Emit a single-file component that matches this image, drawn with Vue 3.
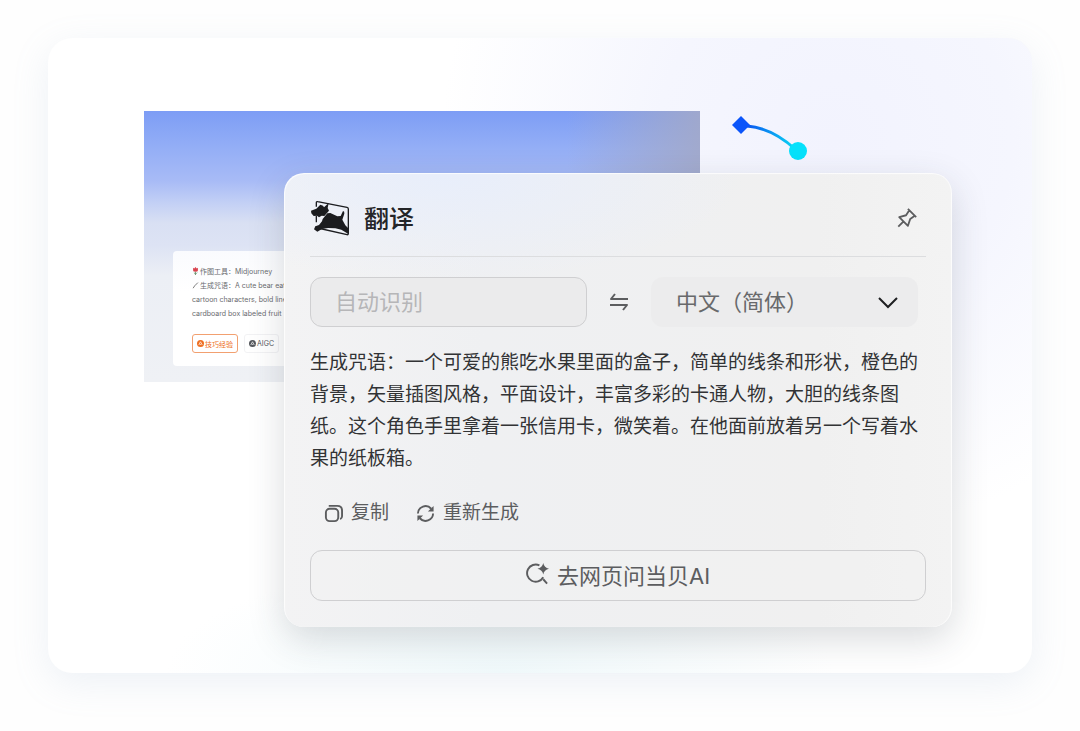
<script setup>
import { ref } from 'vue'

const source = ref('')
const target = ref('zh')
const translation =
  '生成咒语：一个可爱的熊吃水果里面的盒子，简单的线条和形状，橙色的背景，矢量插图风格，平面设计，丰富多彩的卡通人物，大胆的线条图纸。这个角色手里拿着一张信用卡，微笑着。在他面前放着另一个写着水果的纸板箱。'
</script>

<template>
  <main class="page">
    <div class="stage">
      <section class="snapshot">
        <article class="prompt">
          <p>
            <svg class="mark" viewBox="0 0 8 10" aria-hidden="true">
              <path d="M1 1l1.500 1L4 0l1.500 2L7 1v3.500Q7 6 4 6T1 4.500z" fill="#d9434f" />
              <path d="M4 6v4M4 9L2 7M4 9l2-2" stroke="#5d8a63" fill="none" />
            </svg>作图工具：Midjourney
          </p>
          <p>
            <svg class="mark" viewBox="0 0 8 10" aria-hidden="true">
              <path d="M1 9l2-3 4-4" stroke="#777" stroke-width="1.200" fill="none" />
            </svg>生成咒语：A cute bear eating
          </p>
          <p>cartoon characters, bold lines</p>
          <p>cardboard box labeled fruit</p>
          <div class="tags">
            <button type="button" class="tag hot">
              <svg viewBox="0 0 8 8" aria-hidden="true">
                <circle cx="4" cy="4" r="4" fill="#ee6f22" />
                <path d="M2 5.500L4 2l2 3.500M3 5h2" stroke="#fff" stroke-width=".8" fill="none" />
              </svg>技巧经验
            </button>
            <button type="button" class="tag">
              <svg viewBox="0 0 8 8" aria-hidden="true">
                <circle cx="4" cy="4" r="4" fill="#55585d" />
                <path d="M2 5.500L4 2l2 3.500M3 5h2" stroke="#fff" stroke-width=".8" fill="none" />
              </svg>AIGC
            </button>
          </div>
        </article>
      </section>

      <svg class="connector" viewBox="0 0 78 48" aria-hidden="true">
        <defs>
          <linearGradient id="link" x1="0" x2="1" y1="0" y2="0">
            <stop offset="0" stop-color="#0b55f0" />
            <stop offset="1" stop-color="#08d8f4" />
          </linearGradient>
        </defs>
        <path d="M16 11Q41 13 64 34" fill="none" stroke="url(#link)" stroke-width="3" />
        <path d="M10 1l9 9-9 9-9-9z" fill="#0b55fa" />
        <circle cx="67" cy="36" r="9" fill="#06e1fb" />
      </svg>

      <section class="panel">
        <header class="head">
          <svg class="logo" viewBox="12 13 120 108" aria-hidden="true">
            <path d="M31 33V21q0-4 4-3l88 17q4 1 4 5v73q0 5-4 4l-88-20q-4-1-4-5M31 60v20" fill="none" stroke="#1b1c1f" stroke-width="4" />
            <path d="M68 22l-3 15 4 8-14 16-8-1-8 5-6-5-10 1-7-8-1-8 16-6 12-12 8 3 3 5z" fill="#1b1c1f" />
            <path d="M50 70l14-17 9-1 21 10 10-1 7-15q5 1 4 8l-6 18 9 17 8 8v17l-20-12-18-4-22-1-18 3-14 8-10-7 4-9 11-4 9-11z" fill="#1b1c1f" />
          </svg>
          <h1>翻译</h1>
          <button type="button" class="pin" aria-label="固定">
            <svg viewBox="0 0 24 24" aria-hidden="true">
              <path d="M13 2l9 9M14.500 3.500L11 9 3.500 11l9.500 9.500L15.500 13l5-3.500M8 16l-5.500 5.500" />
            </svg>
          </button>
        </header>

        <div class="languages">
          <input v-model="source" type="text" placeholder="自动识别" aria-label="源语言" />
          <button type="button" class="swap" aria-label="交换语言">
            <svg viewBox="0 0 20 20" aria-hidden="true">
              <path d="M19 7H2l4-5M1 13h17l-4 5" />
            </svg>
          </button>
          <div class="select">
            <select v-model="target" aria-label="目标语言">
              <option value="zh">中文（简体）</option>
            </select>
            <svg viewBox="0 0 20 20" aria-hidden="true"><path d="M1 6l9 9 9-9" /></svg>
          </div>
        </div>

        <p class="result">{{ translation }}</p>

        <div class="actions">
          <button type="button">
            <svg viewBox="0 0 20 20" aria-hidden="true">
              <rect x="2" y="5" width="13" height="13" rx="4" />
              <path d="M5 2h9q5 0 5 5v6q0 2-2 3" />
            </svg>复制
          </button>
          <button type="button">
            <svg viewBox="0 0 20 20" aria-hidden="true">
              <path d="M2 10a8 8 0 0 1 14-5M18 10a8 8 0 0 1-14 5" />
              <path class="solid" d="M18.500 2v6h-6zM1.500 18v-6h6z" />
            </svg>重新生成
          </button>
        </div>

        <button type="button" class="ask">
          <svg viewBox="0 0 24 24" aria-hidden="true">
            <path d="M14 3.500A9 9 0 1 0 18 16M18 18l4 4.500" />
            <path class="solid" d="M18 1q1 5 6 6-5 1-6 6-1-5-6-6 5-1 6-6z" />
          </svg>
          <span>去网页问当贝AI</span>
        </button>
      </section>
    </div>
  </main>
</template>

<style>
body {
  margin: 0;
  background: #fefefe;
}
</style>

<style scoped>
.page {
  padding: 38px 48px 58px;
  font-family: Inter, "Noto Sans CJK SC", sans-serif;
}

.stage {
  display: grid;
  grid-template-columns: 140px 104fr 63fr;
  grid-template-rows: 62px 209px auto;
  padding: 73px 80px 46px 96px;
  border-radius: 24px;
  background:
    radial-gradient(ellipse 40% 62% at 80% 16%, #f2f3fe 0%, #f5f6fe 45%, #fff0 100%),
    radial-gradient(ellipse 34% 18% at 46% 100%, #f0f9fb 0%, #fff0 100%),
    #fff;
  box-shadow: 0 10px 36px #8fa9c626;
}

.snapshot {
  grid-area: 1 / 1 / 3 / 3;
  padding: 140px 0 16px 29px;
  background:
    linear-gradient(90deg, #a3a9c800 76%, #a3a9c8e0 100%) top / 100% 100px no-repeat,
    linear-gradient(#7d9df5 0, #92adf6 34px, #a8bbf6 70px, #c3d0f5 92px, #d9e0f3 112px, #dde3f4 134px, #eceff5 165px, #eff1f5 100%);
}

.prompt {
  box-sizing: border-box;
  height: 100%;
  padding: 14px 0 0 19px;
  border-radius: 4px;
  background: linear-gradient(#fafbfe, #fff 40px);
  overflow: hidden;
}

.prompt p {
  margin: 0;
  color: #6a6b6f;
  font-size: 7px;
  line-height: 14px;
  white-space: nowrap;
}

.mark {
  width: 7px;
  height: 8px;
  margin-right: 1px;
  vertical-align: -1px;
}

.tags {
  display: flex;
  gap: 6px;
  margin-top: 13px;
}

.tag {
  display: flex;
  align-items: center;
  gap: 1px;
  height: 19px;
  padding: 0 4px;
  border: 1px solid #f2f2f4;
  border-radius: 3px;
  background: #fff;
  color: #55585d;
  font: 7px Inter, "Noto Sans CJK SC", sans-serif;
}

.tag svg {
  width: 7px;
  height: 7px;
}

.hot {
  border-color: #f2a070;
  color: #ee6f22;
}

.connector {
  grid-area: 1 / 3;
  width: 78px;
  height: 48px;
  margin: 4px 0 0 31px;
}

.panel {
  grid-area: 2 / 2 / 4 / 4;
  padding: 0 26px 26px;
  border-radius: 20px;
  background:
    radial-gradient(ellipse 45% 24% at 24% 0, #e8eefb 0%, #e9edf600 100%),
    linear-gradient(90deg, #f3f3f4, #eff0f2 30%, #f0f0f0 80%, #f3f3f3);
  box-shadow:
    inset 1px 1px 1px #fffc,
    inset -1px 0 1px #fffc,
    0 12px 36px #2a35402e;
}

.head {
  display: flex;
  align-items: center;
  height: 83px;
  border-bottom: 1px solid #dcdddf;
}

.logo {
  width: 40px;
  height: 36px;
  margin-top: 6px;
}

h1 {
  margin: 8px 0 0 14px;
  color: #242528;
  font-size: 25px;
  font-weight: 500;
  line-height: 36px;
}

button {
  color: #5c5d5f;
  cursor: pointer;
}

svg {
  flex: none;
}

.pin {
  margin: 6px 8px 0 auto;
  padding: 0;
  border: 0;
  background: none;
  line-height: 0;
}

.pin svg {
  width: 22px;
  height: 22px;
}

.pin path,
.swap path,
.actions svg,
.ask path {
  fill: none;
  stroke: currentColor;
  stroke-width: 2;
  stroke-linejoin: round;
}

.languages {
  display: grid;
  grid-template-columns: 276fr auto 266fr;
  align-items: center;
  margin-top: 20px;
  padding-right: 8px;
}

input {
  box-sizing: border-box;
  width: 100%;
  min-width: 0;
  height: 50px;
  padding: 0 24px;
  border: 1px solid #cfcfd1;
  border-radius: 12px;
  background: #ebebec;
  color: #444;
  font: 22px Inter, "Noto Sans CJK SC", sans-serif;
}

input::placeholder {
  color: #b6b6b8;
  opacity: 1;
}

.swap {
  margin: 0 22px;
  padding: 0;
  border: 0;
  background: none;
  line-height: 0;
}

.swap svg {
  width: 20px;
  height: 20px;
}

.select {
  position: relative;
  min-width: 0;
}

select {
  width: 100%;
  height: 50px;
  padding: 0 48px 0 25px;
  border: 0;
  border-radius: 12px;
  background: #ececed;
  color: #68696b;
  font: 22px Inter, "Noto Sans CJK SC", sans-serif;
  appearance: none;
}

.select svg {
  position: absolute;
  top: 15px;
  right: 20px;
  width: 20px;
  height: 20px;
  fill: none;
  stroke: #1f2022;
  stroke-width: 2;
  pointer-events: none;
}

.result {
  margin: 20px 0 0;
  color: #323335;
  font-size: 19px;
  line-height: 32px;
}

.actions {
  display: flex;
  gap: 27px;
  margin: 22px 0 0 14px;
}

.actions button {
  display: flex;
  align-items: center;
  gap: 8px;
  padding: 0;
  border: 0;
  background: none;
  font: 19px/32px Inter, "Noto Sans CJK SC", sans-serif;
}

.actions svg {
  width: 19px;
  height: 19px;
}

.actions .solid,
.ask .solid {
  fill: currentColor;
  stroke: none;
}

.ask {
  display: flex;
  align-items: center;
  justify-content: center;
  gap: 8px;
  width: 100%;
  height: 51px;
  margin-top: 21px;
  padding: 0 0 4px;
  border: 1px solid #cfcfd1;
  border-radius: 12px;
  background: #f1f1f180;
  font: 22px Inter, "Noto Sans CJK SC", sans-serif;
}

.ask svg {
  width: 23px;
  height: 23px;
}
</style>
